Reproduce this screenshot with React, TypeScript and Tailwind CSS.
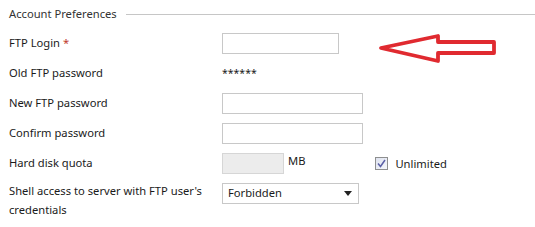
import React from 'react';

const font = { fontFamily: '"Noto Sans", "Open Sans", sans-serif' };

function TextInput({ width, disabled }: { width: string; disabled?: boolean }) {
  return (
    <div
      className={`${width} h-[21px] border ${disabled ? 'border-[#d6d6d6] bg-[#ececec]' : 'border-[#c8c8c8] bg-white'}`}
    />
  );
}

export default function App() {
  return (
    <div className="relative w-[535px] h-[227px] bg-white text-[11.2px] text-[#1a1a1a] overflow-hidden" style={font}>
      <div className="flex items-center h-[29px] pl-[9px]">
        <span className="text-[#333]">Account Preferences</span>
        <div className="flex-1 ml-[9px] border-t border-[#c6c6c6]" />
      </div>

      <div className="flex flex-col pl-[9px]">
        <div className="flex items-center h-[29px]">
          <div className="w-[213px]">
            FTP Login <span className="text-[#c0392b]">*</span>
          </div>
          <TextInput width="w-[117px]" />
        </div>
        <div className="flex items-center h-[30px]">
          <div className="w-[213px]">Old FTP password</div>
          <span className="text-[10.5px] leading-none">******</span>
        </div>
        <div className="flex items-center h-[30px]">
          <div className="w-[213px]">New FTP password</div>
          <TextInput width="w-[141px]" />
        </div>
        <div className="flex items-center h-[30px]">
          <div className="w-[213px]">Confirm password</div>
          <TextInput width="w-[141px]" />
        </div>
        <div className="flex items-center h-[30px]">
          <div className="w-[213px]">Hard disk quota</div>
          <TextInput width="w-[62px]" disabled />
          <span className="ml-[4px] -mt-[4px]">MB</span>
          <div className="ml-[70px] flex items-center gap-[7px] mt-[2px]">
            <div className="w-[13px] h-[13px] border border-[#8e8f8f] bg-gradient-to-br from-[#dfe3f0] to-[#f4f6fb] flex items-center justify-center">
              <svg width="9" height="9" viewBox="0 0 9 9">
                <path d="M1 4.5 L3.5 7.5 L8 1" fill="none" stroke="#5a5fa6" strokeWidth="1.5" />
              </svg>
            </div>
            <span>Unlimited</span>
          </div>
        </div>
        <div className="flex items-start pt-[5px]">
          <div className="w-[213px] leading-[19px] -mt-[2px]">
            Shell access to server with FTP user's
            <br />
            credentials
          </div>
          <div className="w-[137px] h-[21px] border border-[#c8c8c8] bg-white flex items-center justify-between pl-[5px] pr-[6px]">
            <span>Forbidden</span>
            <svg width="8" height="5" viewBox="0 0 8 5">
              <path d="M0 0 H8 L4 5 Z" fill="#222" />
            </svg>
          </div>
        </div>
      </div>

      <svg className="absolute left-[378px] top-[32px]" width="120" height="33" viewBox="0 0 120 33">
        <path
          d="M3 16 L60 4 L60 10 L116 10 L116 21 L60 21 L60 29 Z"
          fill="none"
          stroke="#e02a30"
          strokeWidth="3.8"
          strokeLinejoin="round"
        />
      </svg>
    </div>
  );
}
